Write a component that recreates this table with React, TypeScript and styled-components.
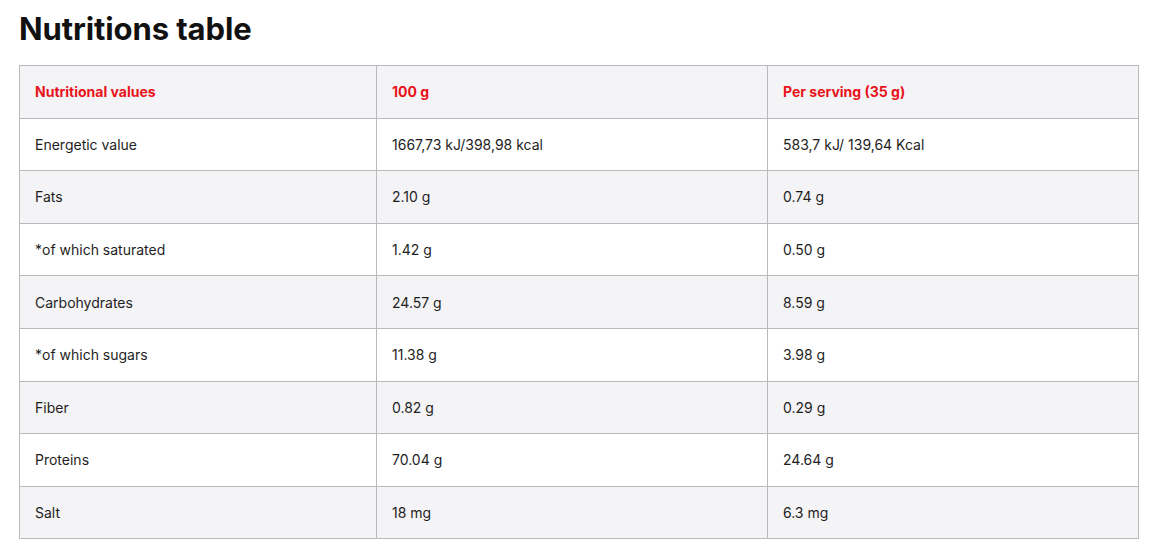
import React from 'react';
import styled, {createGlobalStyle} from 'styled-components';

const GlobalStyle = createGlobalStyle`
  body {
    margin: 0;
    background: #ffffff;
    font-family: Inter, "Liberation Sans", sans-serif;
    color: #1a1a1a;
  }
`;

interface Row {
    label: string;
    per100: string;
    perServing: string;
}

const rows: Row[] = [
    {label: 'Energetic value', per100: '1667,73 kJ/398,98 kcal', perServing: '583,7 kJ/ 139,64 Kcal'},
    {label: 'Fats', per100: '2.10 g', perServing: '0.74 g'},
    {label: '*of which saturated', per100: '1.42 g', perServing: '0.50 g'},
    {label: 'Carbohydrates', per100: '24.57 g', perServing: '8.59 g'},
    {label: '*of which sugars', per100: '11.38 g', perServing: '3.98 g'},
    {label: 'Fiber', per100: '0.82 g', perServing: '0.29 g'},
    {label: 'Proteins', per100: '70.04 g', perServing: '24.64 g'},
    {label: 'Salt', per100: '18 mg', perServing: '6.3 mg'},
];

const App: React.FC = () => {
    return (
        <>
            <GlobalStyle/>
            <Page>
                <Title>Nutritions table</Title>
                <Table>
                    <colgroup>
                        <col style={{width: 357}}/>
                        <col style={{width: 391}}/>
                        <col/>
                    </colgroup>
                    <thead>
                    <BodyRow shaded>
                        <HeadCell>Nutritional values</HeadCell>
                        <HeadCell>100 g</HeadCell>
                        <HeadCell>Per serving (35 g)</HeadCell>
                    </BodyRow>
                    </thead>
                    <tbody>
                    {rows.map((row, i) => (
                        <BodyRow key={row.label} shaded={i % 2 === 1}>
                            <Cell>{row.label}</Cell>
                            <Cell>{row.per100}</Cell>
                            <Cell>{row.perServing}</Cell>
                        </BodyRow>
                    ))}
                    </tbody>
                </Table>
            </Page>
        </>
    );
};

const Page = styled.div`
  padding: 12px 21px 0 19px;
`;

const Title = styled.h1`
  margin: 0 0 19px;
  font-family: Inter, "Liberation Sans", sans-serif;
  font-size: 31px;
  line-height: 34px;
  font-weight: 700;
  letter-spacing: -0.1px;
  color: #111111;
`;

const Table = styled.table`
  width: 1120px;
  border-collapse: collapse;
  table-layout: fixed;
  border: 1px solid #b9b9bb;
`;

const BodyRow = styled.tr<{ shaded?: boolean }>`
  background: ${(props) => props.shaded ? '#f4f3f5' : '#ffffff'};
`;

const Cell = styled.td`
  height: 52.6px;
  padding: 0 15px;
  border: 1px solid #b9b9bb;
  font-size: 14px;
  color: #1e1e1e;
  text-align: left;
  box-sizing: border-box;
`;

const HeadCell = styled.th`
  height: 52.6px;
  padding: 0 15px;
  border: 1px solid #b9b9bb;
  font-size: 14px;
  font-weight: 700;
  color: #e8141b;
  text-align: left;
  box-sizing: border-box;
`;

export default App;
